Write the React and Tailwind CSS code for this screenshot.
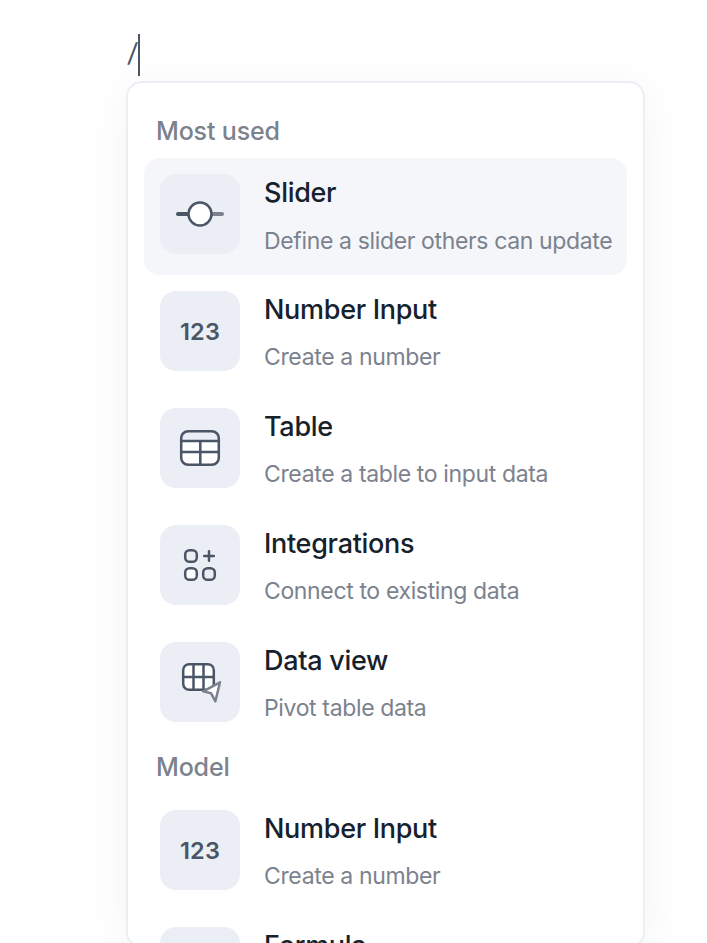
const INK = '#4a5565'
const MUTED = '#7b828e'

function SliderIcon() {
  return (
    <svg width="80" height="80" viewBox="0 0 80 80" fill="none">
      <path d="M18 40h12" stroke={INK} strokeWidth="4" strokeLinecap="round" />
      <path d="M50 40h12" stroke={MUTED} strokeWidth="4" strokeLinecap="round" />
      <circle cx="40" cy="40" r="11.5" fill="#fff" stroke={INK} strokeWidth="2.5" />
    </svg>
  )
}

function NumberIcon() {
  return (
    <span className="pt-0.5 text-[23.5px] font-semibold leading-none tracking-[0.2px] text-[#4a5565]">123</span>
  )
}

function TableIcon() {
  return (
    <svg width="80" height="80" viewBox="0 0 80 80" fill="none" stroke={INK} strokeWidth="2.5">
      <path d="M21 33h38v17a7 7 0 0 1-7 7H28a7 7 0 0 1-7-7z" fill="#fff" stroke="none" />
      <rect x="21.2" y="23.2" width="37.6" height="33.6" rx="7" />
      <path d="M21 33h38M21 44h38M40.3 33v24" />
    </svg>
  )
}

function IntegrationsIcon() {
  return (
    <svg width="80" height="80" viewBox="0 0 80 80" fill="none" stroke={INK} strokeWidth="2.5" strokeLinecap="round">
      <rect x="25.2" y="25.2" width="11.6" height="11.6" rx="4.4" />
      <rect x="25.2" y="43.2" width="11.6" height="11.6" rx="4.4" fill="#fff" />
      <rect x="43.2" y="43.2" width="11.6" height="11.6" rx="4.4" />
      <path d="M49 26.2v9.6M44.2 31h9.6" />
    </svg>
  )
}

function DataViewIcon() {
  return (
    <svg width="80" height="80" viewBox="0 0 80 80" fill="none" stroke={INK} strokeWidth="2.5" strokeLinejoin="round">
      <rect x="23.2" y="22.2" width="30.6" height="25.6" rx="6" fill="#fff" />
      <path d="M33.5 22.2v25.6M43.5 22.2v25.6M23.2 35h30.6" />
      <path d="M60 40.3L43.2 49.3l7.8 1.9 4.4 8.1z" fill="#fff" stroke={MUTED} strokeWidth="2.5" />
    </svg>
  )
}

const SECTIONS = [
  {
    label: 'Most used',
    items: [
      { title: 'Slider', desc: 'Define a slider others can update', Icon: SliderIcon, active: true },
      { title: 'Number Input', desc: 'Create a number', Icon: NumberIcon },
      { title: 'Table', desc: 'Create a table to input data', Icon: TableIcon },
      { title: 'Integrations', desc: 'Connect to existing data', Icon: IntegrationsIcon },
      { title: 'Data view', desc: 'Pivot table data', Icon: DataViewIcon },
    ],
  },
  {
    label: 'Model',
    items: [
      { title: 'Number Input', desc: 'Create a number', Icon: NumberIcon },
      { title: 'Formula', Icon: null },
    ],
  },
]

function MenuItem({ title, desc, Icon, active }) {
  return (
    <li className={`flex h-[117px] gap-6 rounded-2xl p-4 ${active ? 'bg-[#f5f6fa]' : ''}`}>
      <div className="flex size-20 shrink-0 items-center justify-center rounded-2xl bg-[#ebeef5]">
        {Icon && <Icon />}
      </div>
      <div className="whitespace-nowrap">
        <p className={`text-[27px] font-medium leading-[38px] tracking-[-0.3px] text-[#17212c] ${active ? 'h-[50px]' : 'h-[49px]'}`}>{title}</p>
        {desc && <p className="text-[23px] leading-[35px] tracking-[-0.36px] text-[#7b828e]">{desc}</p>}
      </div>
    </li>
  )
}

export default function App() {
  return (
    <div className="h-[943px] w-[707px] overflow-hidden bg-white pl-[126px] font-['Inter',sans-serif]">
      <div className="flex h-[81px] items-start pt-[34px]">
        <span className="w-3 origin-center -skew-x-6 pl-0.5 text-[26px] leading-[38px] text-[#4a5565]">/</span>
        <span className="h-[42px] w-0.5 bg-[#4a5565]" />
      </div>

      <div className="h-[867px] w-[519px] overflow-hidden rounded-2xl border-2 border-[#ebeef5] bg-white px-4 pt-6 shadow-[0_8px_48px_rgba(0,0,0,0.05)]">
        {SECTIONS.map((section) => (
          <section key={section.label}>
            <h2 className="h-[51px] pl-3 text-[25px] font-medium leading-[48px] tracking-[-0.15px] text-[#7b828e]">{section.label}</h2>
            <ul>
              {section.items.map((item) => (
                <MenuItem key={item.title} {...item} />
              ))}
            </ul>
          </section>
        ))}
      </div>
    </div>
  )
}
